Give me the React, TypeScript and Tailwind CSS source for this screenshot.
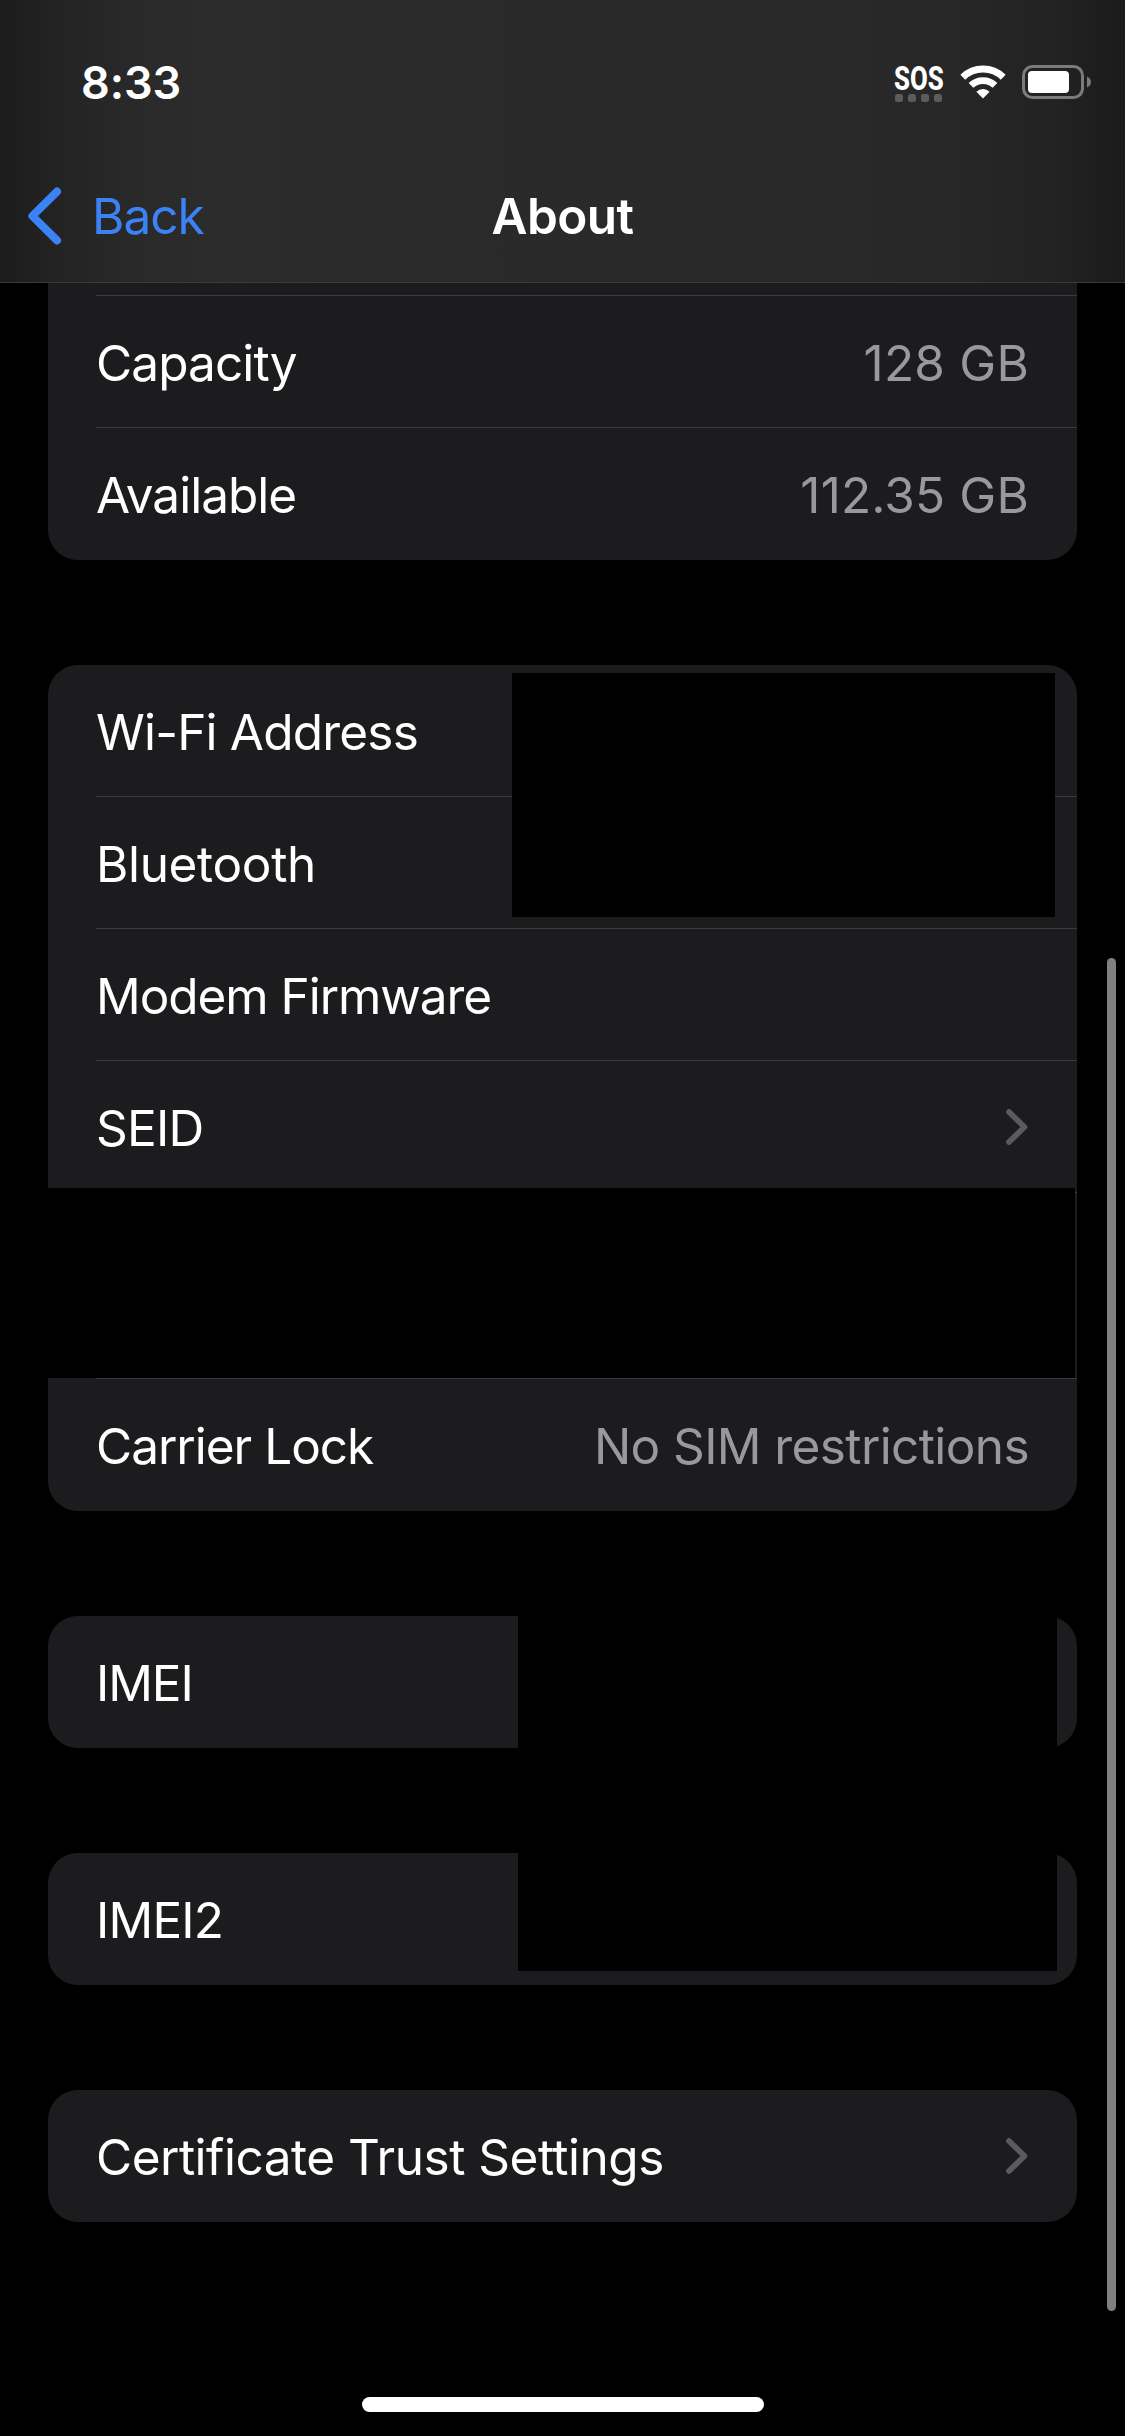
import React from 'react';
import clsx from 'clsx';

interface RowProps {
  label?: string;
  value?: string;
  chevron?: boolean;
  divider?: boolean;
  labelClass?: string;
  valueClass?: string;
}

const ChevronRight: React.FC = () => (
  <svg width="22" height="36" viewBox="0 0 22 36" fill="none" className="mr-[1px] mb-[2px]">
    <path
      d="M3 3L18.4 18L3 33"
      stroke="#5a5a5f"
      strokeWidth="5.8"
      strokeLinecap="round"
      strokeLinejoin="round"
    />
  </svg>
);

const Row: React.FC<RowProps> = ({ label, value, chevron, divider, labelClass, valueClass }) => (
  <div className="pl-12 h-[132px]">
    <div
      className={clsx(
        'flex items-center justify-between h-full pr-12 pt-[3px] border-b',
        divider ? 'border-[#3d3d40]' : 'border-transparent'
      )}
    >
      <span className={clsx('whitespace-nowrap', labelClass)}>{label}</span>
      {value && <span className={clsx('whitespace-nowrap text-[#98989f]', valueClass)}>{value}</span>}
      {chevron && <ChevronRight />}
    </div>
  </div>
);

const Card: React.FC<{ children: React.ReactNode; className?: string }> = ({ children, className }) => (
  <section className={clsx('relative bg-[#1c1c1e]', className ?? 'rounded-[30px]')}>{children}</section>
);

const StatusBar: React.FC = () => (
  <div className="flex justify-between h-[164px] pl-[81px] pr-[34px]">
    <span className="mt-[56px] text-[45px] leading-[54px] font-semibold tracking-[-0.1px]">8:33</span>
    <div className="flex items-start mt-[65px]">
      <div className="w-12 mr-[17px]">
        <div className="h-[29px] -ml-[1px] leading-[28px] font-['Roboto'] text-[33px] font-extrabold origin-left scale-x-[0.78] whitespace-nowrap">
          SOS
        </div>
        <div className="flex gap-[5px]">
          {[0, 1, 2, 3].map((dot) => (
            <div key={dot} className="size-2 rounded-[2.5px] bg-[#5c5c5d]" />
          ))}
        </div>
      </div>
      <svg width="46" height="34" viewBox="0 0 46 34" fill="none" className="mr-4">
        <path d="M2.8 12.2A29 29 0 0 1 43.2 12.2" stroke="#fff" strokeWidth="7" />
        <path d="M11 20.4A17.4 17.4 0 0 1 35 20.4" stroke="#fff" strokeWidth="6.8" />
        <path d="M23 33.4L16.4 26.8A9.3 9.3 0 0 1 29.6 26.8Z" fill="#fff" />
      </svg>
      <svg width="69" height="34" viewBox="0 0 69 34" fill="none">
        <rect x="1.5" y="1.5" width="59" height="31" rx="9" stroke="#7b7b7c" strokeWidth="3" />
        <rect x="6" y="6" width="41" height="22" rx="4" fill="#fff" />
        <path d="M65 11.5C67.5 12.5 69 14.5 69 17C69 19.5 67.5 21.5 65 22.5Z" fill="#7b7b7c" />
      </svg>
    </div>
  </div>
);

const App: React.FC = () => {
  return (
    <div className="relative w-[1125px] h-[2436px] overflow-hidden bg-black text-white font-['Inter',sans-serif] text-[49.5px] leading-[60px]">
      <header className="h-[283px] border-b border-[#3a3a3c] bg-[linear-gradient(90deg,#1c1c1d_0%,#232324_5%,#2a2a2b_13%,#2c2c2d_20%,#2a2a2b_32%,#29292a_72%,#272728_85%,#222223_94%,#1b1b1b_100%)]">
        <StatusBar />
        <nav className="grid grid-cols-3 items-center h-[104px]">
          <a href="#" className="flex items-center text-[#3b82f6]">
            <svg width="35" height="58" viewBox="0 0 35 58" fill="none" className="ml-[27px] mr-[30px]">
              <path
                d="M30 4.6L5.4 29L30 53.4"
                stroke="currentColor"
                strokeWidth="8"
                strokeLinecap="round"
                strokeLinejoin="round"
              />
            </svg>
            <span className="tracking-[-1px]">Back</span>
          </a>
          <h1 className="text-center font-semibold tracking-[-0.6px]">About</h1>
        </nav>
      </header>

      <main className="flex flex-col gap-[105px] mx-12">
        <Card className="rounded-b-[30px]">
          <div className="pl-12">
            <div className="h-[13px] border-b border-[#3d3d40]" />
          </div>
          <Row label="Capacity" value="128 GB" divider labelClass="tracking-[-0.9px]" valueClass="tracking-[0.2px]" />
          <Row label="Available" value="112.35 GB" labelClass="tracking-[-1px]" valueClass="tracking-[0.15px]" />
        </Card>

        <Card>
          <Row label="Wi-Fi Address" divider labelClass="tracking-[-0.8px]" />
          <Row label="Bluetooth" divider labelClass="tracking-[-0.35px]" />
          <Row label="Modem Firmware" divider labelClass="tracking-[-1.05px]" />
          <Row label="SEID" chevron divider labelClass="tracking-[-0.8px]" />
          <div className="pl-12">
            <div className="h-[186px] border-b border-[#3d3d40]" />
          </div>
          <Row
            label="Carrier Lock"
            value="No SIM restrictions"
            labelClass="tracking-[-1px]"
            valueClass="tracking-[-0.6px]"
          />
          {/* blacked out values */}
          <div className="absolute left-[464px] top-[8px] w-[543px] h-[244px] bg-black" />
          <div className="absolute left-0 top-[523px] w-[1027px] h-[190px] bg-black" />
        </Card>

        <Card>
          <Row label="IMEI" labelClass="tracking-[-1.1px]" />
          <div className="absolute left-[470px] top-0 w-[539px] h-[132px] bg-black" />
        </Card>

        <Card>
          <Row label="IMEI2" labelClass="tracking-[-0.8px]" />
          <div className="absolute left-[470px] top-0 w-[539px] h-[118px] bg-black" />
        </Card>

        <Card>
          <Row label="Certificate Trust Settings" chevron labelClass="tracking-[-0.5px]" />
        </Card>
      </main>

      {/* scroll indicator */}
      <div className="absolute left-[1107px] top-[958px] w-[9px] h-[1353px] rounded-full bg-[#808080]" />
      {/* home indicator */}
      <div className="absolute left-[362px] top-[2397px] w-[402px] h-[15px] rounded-full bg-white" />
    </div>
  );
};

export default App;
